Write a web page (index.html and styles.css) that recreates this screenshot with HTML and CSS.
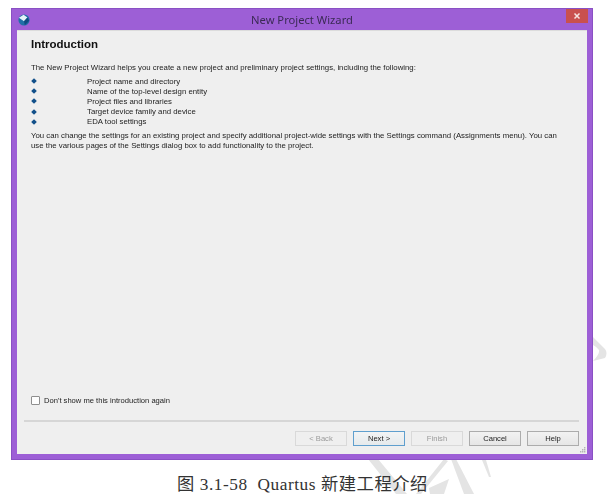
FILE: index.html
```html
<!DOCTYPE html>
<html lang="en">
<head>
<meta charset="utf-8">
<title>New Project Wizard</title>
<link rel="stylesheet" href="styles.css">
</head>
<body>
<svg class="watermark" width="610" height="494" viewBox="0 0 610 494" aria-hidden="true">
  <path d="M593 337 L605 349 Q608 353 605 358 L593 361 Q600 354 599 350 Q597 347 593 345 Z"/>
  <path d="M368 459 L378 459 L407 494 L396 494 Z"/>
  <path d="M444 459 L448 461 L421 494 L416 494 Z"/>
  <path d="M451 459 L456 459 L474 494 L464 494 Z"/>
  <path d="M429 488 L449 479 L444 494 L430 494 Z"/>
  <path d="M482 460 L486 460 L491 477 L489 477 Z"/>
</svg>
<main class="window">
  <header class="titlebar">
    <svg class="app-icon" width="12" height="12" viewBox="0 0 14 14" aria-hidden="true">
      <circle cx="7" cy="7" r="6.5" fill="#1f6fa8"/>
      <path d="M1 4.5 L6.5 1 L11 4 L7 8.5 Z" fill="#e4f2f8"/>
      <path d="M7 8.5 L11 4 L13 8 L8 13 Z" fill="#0f4a80"/>
    </svg>
    <h1 class="title">New Project Wizard</h1>
    <button class="close" type="button" aria-label="Close">
      <svg width="8" height="8" viewBox="0 0 8 8" aria-hidden="true"><path d="M1.5 1.5 L6.5 6.5 M6.5 1.5 L1.5 6.5" stroke="#f6e4e2" stroke-width="1.5"/></svg>
    </button>
  </header>
  <section class="client">
    <div class="content">
      <h2 class="heading">Introduction</h2>
      <p class="para">The New Project Wizard helps you create a new project and preliminary project settings, including the following:</p>
      <ul class="list">
        <li class="item"><span class="bullet"></span>Project name and directory</li>
        <li class="item"><span class="bullet"></span>Name of the top-level design entity</li>
        <li class="item"><span class="bullet"></span>Project files and libraries</li>
        <li class="item"><span class="bullet"></span>Target device family and device</li>
        <li class="item"><span class="bullet"></span>EDA tool settings</li>
      </ul>
      <p class="para">You can change the settings for an existing project and specify additional project-wide settings with the Settings command (Assignments menu). You can use the various pages of the Settings dialog box to add functionality to the project.</p>
    </div>
    <label class="check"><span class="box"></span>Don't show me this introduction again</label>
    <div class="rule"></div>
    <footer class="buttons">
      <span class="btn off">&lt; Back</span>
      <span class="btn primary">Next &gt;</span>
      <span class="btn off">Finish</span>
      <span class="btn">Cancel</span>
      <span class="btn">Help</span>
    </footer>
    <svg class="grip" width="6" height="6" viewBox="0 0 6 6" aria-hidden="true">
      <path d="M4 0h1.4v1.4H4zM2 2h1.4v1.4H2zM4 2h1.4v1.4H4zM0 4h1.4v1.4H0zM2 4h1.4v1.4H2zM4 4h1.4v1.4H4z" fill="#b4b4b4"/>
    </svg>
  </section>
</main>
<p class="caption">图 3.1-58&nbsp; Quartus 新建工程介绍</p>
</body>
</html>
```

FILE: styles.css
```css
* { box-sizing: border-box; }
html, body { margin: 0; padding: 0; }
body {
  width: 610px;
  height: 494px;
  overflow: hidden;
  background: #fff;
  position: relative;
  padding: 8px 0 0 11px;
  font-family: "Liberation Sans", Arial, sans-serif;
}
.watermark { position: absolute; left: 0; top: 0; fill: #e4e4e4; filter: blur(.4px); }
.window {
  position: relative;
  width: 582px;
  height: 452px;
  background: #9d5fd6;
  border: 1px solid #8a50c4;
  display: flex;
  flex-direction: column;
  padding: 0 5px 5px;
  filter: blur(.3px);
}
.titlebar {
  height: 21px;
  flex: none;
  display: flex;
  align-items: center;
  position: relative;
}
.app-icon { margin: 0 0 0 1px; flex: none; }
.title {
  position: absolute;
  left: 0;
  right: 0;
  top: 3px;
  margin: 0;
  text-align: center;
  font: 400 11.2px/16px "Noto Sans", "Open Sans", sans-serif;
  color: #3b2a55;
}
.close {
  position: absolute;
  right: -1px;
  top: 0;
  width: 22px;
  height: 14px;
  border: 0;
  padding: 0;
  background: #c9504e;
  display: flex;
  align-items: center;
  justify-content: center;
}
.client {
  flex: 1;
  background: #efefef;
  border: 1px solid #dcdcdc;
  border-width: 1px 0 0;
  position: relative;
  display: flex;
  flex-direction: column;
  padding: 0 8px 0 7px;
  color: #222;
}
.content { flex: 1; padding: 5px 0 0 7px; }
.heading {
  margin: 0 0 11px;
  font-size: 11.5px;
  line-height: 16px;
  font-weight: 700;
  color: #111;
}
.para {
  margin: 0;
  font-size: 7.8px;
  line-height: 10px;
  width: 540px;
}
.list { list-style: none; margin: 3px 0 4px; padding: 0; }
.item {
  display: flex;
  align-items: center;
  height: 10.2px;
  font-size: 7.8px;
}
.bullet {
  width: 4px;
  height: 4px;
  background: #12508a;
  transform: rotate(45deg);
  margin: 0 51px 0 1px;
  flex: none;
}
.check {
  display: flex;
  align-items: center;
  gap: 4px;
  margin: 0 0 0 7px;
  height: 12px;
  font-size: 7.6px;
}
.box {
  width: 9px;
  height: 9px;
  background: #fdfdfd;
  border: 1px solid #8e8e8e;
  border-radius: 1px;
}
.rule {
  height: 2px;
  background: #d6d6d6;
  margin: 14px 0 9px;
}
.buttons {
  display: flex;
  justify-content: flex-end;
  gap: 6px;
  height: 15px;
  margin-bottom: 8px;
}
.btn {
  width: 52px;
  height: 15px;
  display: flex;
  align-items: center;
  justify-content: center;
  border: 1px solid #acacac;
  background: linear-gradient(#f2f2f2, #e6e6e6);
  font-size: 7.6px;
  color: #222;
}
.btn.off { border-color: #d9d9d9; background: #efefef; color: #9a9a9a; }
.btn.primary { border-color: #5f9fce; background: linear-gradient(#f2f4f5, #e6eaec); }
.grip { position: absolute; right: 1px; bottom: 1px; }
.caption {
  position: absolute;
  left: 0;
  width: 605px;
  top: 475px;
  margin: 0;
  text-align: center;
  font: 17.3px/20px "Liberation Serif", "Noto Sans CJK SC", serif;
  letter-spacing: .55px;
  color: #333;
}
```
